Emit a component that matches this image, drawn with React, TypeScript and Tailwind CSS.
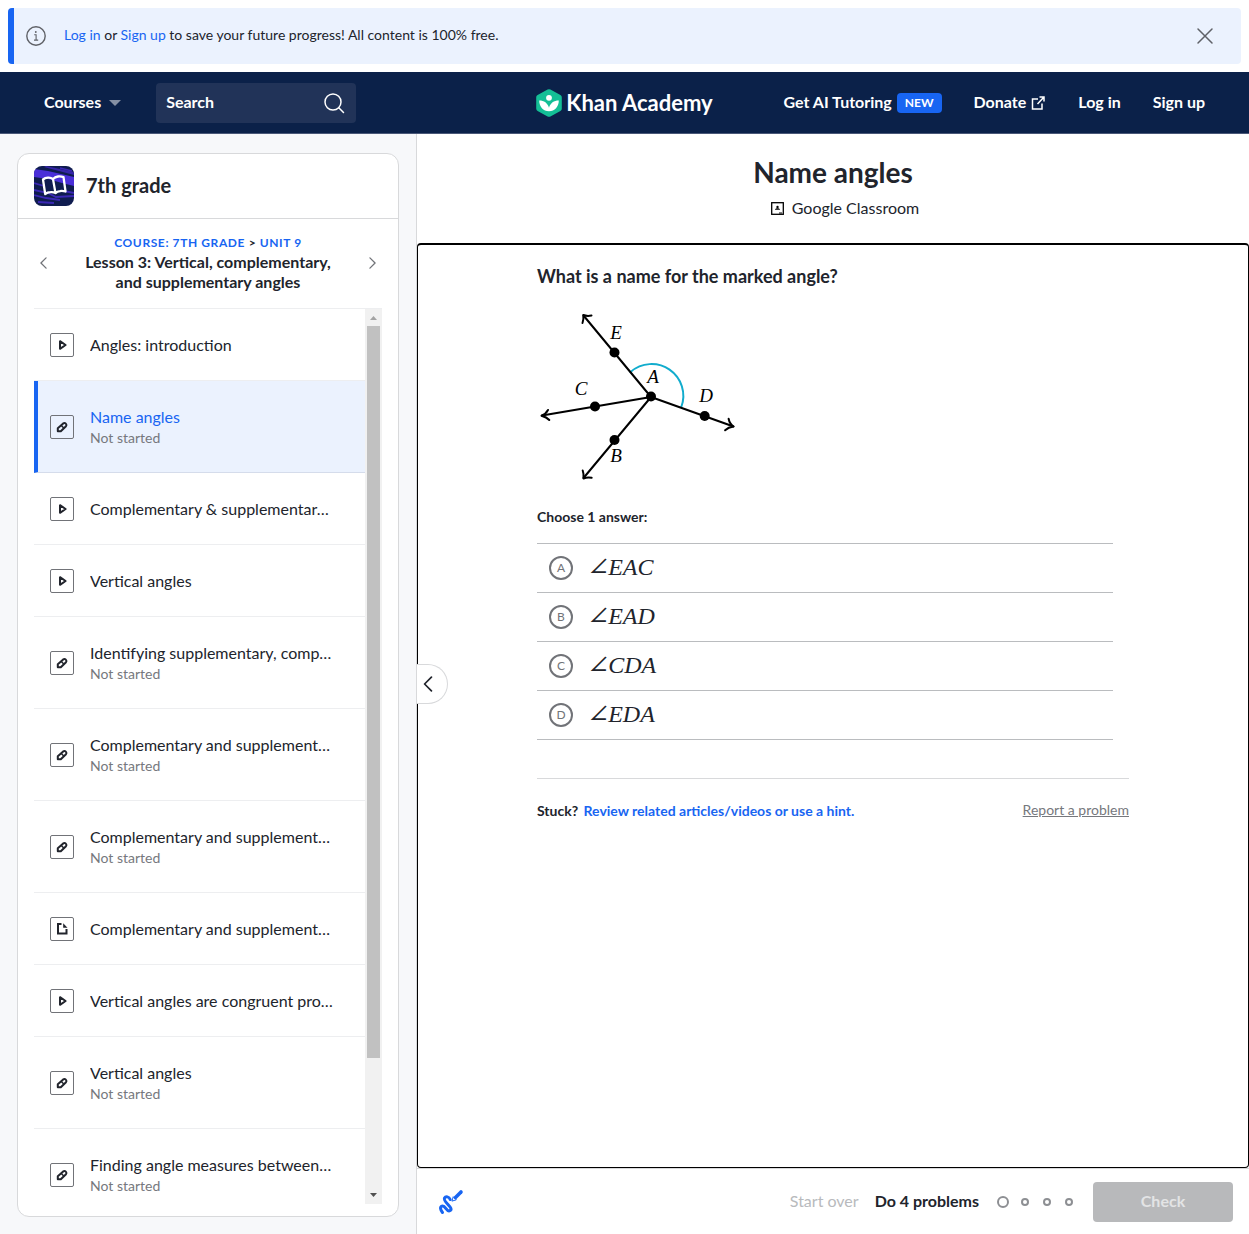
import React from "react";

type Kind = "video" | "exercise" | "article";

const lessons: { kind: Kind; title: string; status?: string; active?: boolean }[] = [
  { kind: "video", title: "Angles: introduction" },
  { kind: "exercise", title: "Name angles", status: "Not started", active: true },
  { kind: "video", title: "Complementary & supplementar…" },
  { kind: "video", title: "Vertical angles" },
  { kind: "exercise", title: "Identifying supplementary, comp…", status: "Not started" },
  { kind: "exercise", title: "Complementary and supplement…", status: "Not started" },
  { kind: "exercise", title: "Complementary and supplement…", status: "Not started" },
  { kind: "article", title: "Complementary and supplement…" },
  { kind: "video", title: "Vertical angles are congruent pro…" },
  { kind: "exercise", title: "Vertical angles", status: "Not started" },
  { kind: "exercise", title: "Finding angle measures between…", status: "Not started" },
];

const choices = [
  { key: "A", name: "EAC" },
  { key: "B", name: "EAD" },
  { key: "C", name: "CDA" },
  { key: "D", name: "EDA" },
];

function KindIcon({ kind }: { kind: Kind }) {
  return (
    <span className="flex size-6 shrink-0 items-center justify-center rounded-xs border border-[#717378]">
      <svg viewBox="0 0 24 24" className="size-6 shrink-0" fill="none" stroke="#21242c" strokeWidth="2" aria-hidden="true">
        {kind === "video" && <path d="M10 8.2v7.6l5.6-3.8z" strokeLinejoin="round" />}
        {kind === "exercise" && (
          <>
            <path d="M7.8 16.2v-3l5.4-4.8a2 2 0 0 1 2.8 2.8l-5.2 5z" strokeLinejoin="round" />
            <path d="M11 10.2l2.8 2.8" strokeWidth="1.5" />
          </>
        )}
        {kind === "article" && (
          <>
            <path d="M11.5 7H8v9.500h8.500v-4.500" />
            <path d="M13.2 6.300v4.500h4.300z" fill="#21242c" stroke="none" />
          </>
        )}
      </svg>
    </span>
  );
}

function Banner() {
  return (
    <div className="m-2 flex h-14 shrink-0 items-center rounded border-l-6 border-[#1865f2] bg-[#ebf2fe] pr-6 pl-3">
      <svg viewBox="0 0 20 20" className="size-5 shrink-0" fill="none" stroke="#5f6167" strokeWidth="1.4" aria-hidden="true">
        <circle cx="10" cy="10" r="9.2" />
        <path d="M8.2 8.8h1.9v5M8 14.1h4.2" strokeWidth="1.1" />
        <circle cx="9.8" cy="6" r="0.9" fill="#5f6167" stroke="none" />
      </svg>
      <p className="ml-[18px] flex-1 pb-0.5 text-sm">
        <a href="#login" className="text-[#1865f2]">Log in</a> or{" "}
        <a href="#signup" className="text-[#1865f2]">Sign up</a> to save your future progress! All content is 100% free.
      </p>
      <button type="button" aria-label="Close" className="flex size-6 items-center justify-center">
        <svg viewBox="0 0 24 24" className="size-6" fill="none" stroke="#5f6167" strokeWidth="1.5" strokeLinecap="round">
          <path d="M5 5l14 14M19 5L5 19" />
        </svg>
      </button>
    </div>
  );
}

function Logo() {
  return (
    <a href="#home" className="flex items-center gap-1">
      <svg viewBox="0 0 26 28" className="h-7 w-[26px]" aria-hidden="true">
        <path
          d="M11.6.5a3 3 0 0 1 2.8 0l10 5.600c.9.5 1.400 1.400 1.400 2.400v11c0 1-.5 1.900-1.400 2.400l-10 5.600a3 3 0 0 1-2.800 0l-10-5.600A2.800 2.800 0 0 1 .2 19.500v-11c0-1 .5-1.900 1.400-2.400z"
          fill="#14bf96"
        />
        <circle cx="13" cy="8.800" r="2.900" fill="#fff" />
        <path
          d="M3.200 11.500c4.800 0 8.600 2.600 9.800 7.200 1.200-4.600 5-7.200 9.800-7.200 0 6-4 10.800-9.800 10.800S3.200 17.500 3.200 11.500z"
          fill="#fff"
        />
      </svg>
      <span className="text-[22px] leading-7 font-bold">Khan Academy</span>
    </a>
  );
}

function Nav() {
  return (
    <header className="grid h-[62px] shrink-0 grid-cols-[1fr_auto_1fr] items-center border-b border-[#4a5878] bg-[#0b2149] px-11 text-base font-bold text-white">
      <div className="flex items-center gap-[35px]">
        <button type="button" className="flex items-center gap-2">
          <span className="pb-0.5">Courses</span>
          <svg viewBox="0 0 12 6" className="h-1.5 w-3" fill="#8590a4" aria-hidden="true">
            <path d="M0 0h12L6 6z" />
          </svg>
        </button>
        <div className="flex h-10 w-[200px] items-center rounded bg-[#213358] px-2.5">
          <input
            type="text"
            aria-label="Search"
            placeholder="Search"
            className="h-10 w-0 flex-1 bg-transparent pb-0.5 outline-none placeholder:text-white"
          />
          <svg viewBox="0 0 24 24" className="size-6" fill="none" stroke="#fff" strokeWidth="1.5" strokeLinecap="round" aria-hidden="true">
            <circle cx="11" cy="11" r="8" />
            <path d="M16.8 16.8L21.5 21.5" />
          </svg>
        </div>
      </div>
      <Logo />
      <nav className="flex items-center justify-end gap-8">
        <a href="#ai" className="flex items-center gap-[5px]">
          <span className="pb-0.5">Get AI Tutoring</span>
          <span className="rounded bg-[#1865f2] px-2 text-xs leading-5">NEW</span>
        </a>
        <a href="#donate" className="flex items-center gap-1">
          <span className="pb-0.5">Donate</span>
          <svg viewBox="0 0 16 16" className="size-4" fill="none" stroke="#fff" strokeWidth="1.5" aria-hidden="true">
            <path d="M8 4H2.500v10H12V8.500" />
            <path d="M9.500 2H14v4.500M14 2L7.500 9" />
          </svg>
        </a>
        <a href="#login" className="pb-0.5">Log in</a>
        <a href="#signup" className="pb-0.5">Sign up</a>
      </nav>
    </header>
  );
}

function CourseIcon() {
  return (
    <svg viewBox="0 0 40 40" className="size-10 rounded-lg" aria-hidden="true">
      <rect width="40" height="40" fill="#0f1c4f" />
      <path d="M0 3l14 2 26 6v9l-12-3-14-4L0 11z" fill="#4a2fd8" />
      <path d="M12 0l28 6v3L10 1z" fill="#3524a8" />
      <path d="M0 17l10 3M0 24l14 3 8 4 18-1M0 29l12 3 14 2M4 36l16 1M30 25l10 2M26 2l12 3" stroke="#3a27b4" strokeWidth="1.8" fill="none" />
      <path
        d="M9 13.500q2-1.600 5-1.800 3-.2 5 1.400 2-2.200 5-2.600 3-.3 5.500.6L31.500 25.500q-3-.8-5.500-.4-2.800.3-4.500 2-2.200-1.200-5-.9-3 .2-5.300 1.800zM19 13.100L21.500 27.100"
        fill="none"
        stroke="#fff"
        strokeWidth="2.3"
        strokeLinejoin="round"
      />
    </svg>
  );
}

function Chevron({ right, className }: { right?: boolean; className: string }) {
  return (
    <svg viewBox="0 0 8 14" className={className} fill="none" stroke="currentColor" strokeWidth="1.5" strokeLinecap="round" strokeLinejoin="round" aria-hidden="true">
      <path d={right ? "M1 1l6 6-6 6" : "M7 1L1 7l6 6"} />
    </svg>
  );
}

function Sidebar() {
  return (
    <aside className="flex w-[417px] shrink-0 flex-col border-r border-[#d8d9db] bg-[#f7f8fa] px-[17px] pt-[19px] pb-[17px]">
      <div className="flex min-h-0 flex-1 flex-col rounded-xl border border-[#d8d9db] bg-white">
        <a href="#course" className="flex items-center gap-3 border-b border-[#d8d9db] px-4 py-3">
          <CourseIcon />
          <span className="pb-[3px] text-xl font-bold">7th grade</span>
        </a>
        <div className="mx-4 flex items-center justify-between border-b border-[#edeef0] px-1.5 pt-3.5 pb-[15px]">
          <button type="button" aria-label="Previous lesson" className="text-[#717378]">
            <Chevron className="h-3 w-[7px]" />
          </button>
          <div className="text-center font-bold">
            <div className="text-xs leading-[19px] tracking-wider text-[#1865f2]">
              <a href="#course">COURSE: 7TH GRADE</a> <span className="text-[#21242c]">&gt;</span> <a href="#unit">UNIT 9</a>
            </div>
            <h2 className="pb-px leading-5">
              Lesson 3: Vertical, complementary,
              <br />
              and supplementary angles
            </h2>
          </div>
          <button type="button" aria-label="Next lesson" className="text-[#717378]">
            <Chevron right className="h-3 w-[7px]" />
          </button>
        </div>
        <div className="mx-4 mb-3 flex min-h-0 flex-1">
          <ul className="min-w-0 flex-1 overflow-hidden">
            {lessons.map((l, i) => (
              <li key={i}>
                <a
                  href="#lesson"
                  className={
                    "flex items-center gap-4 border-b pr-4 " +
                    (l.status ? "h-[92px] " : "h-[72px] ") +
                    (l.active ? "border-b-[#d5dceb] border-l-4 border-l-[#1865f2] bg-[#ebf2fe] pl-3" : "border-[#edeef0] pl-4")
                  }
                >
                  <KindIcon kind={l.kind} />
                  <span className="min-w-0">
                    <span className={"block truncate " + (l.status ? "pt-0.5 leading-5 " : "leading-5 ") + (l.active ? "text-[#1865f2]" : "")}>{l.title}</span>
                    {l.status && <span className="block text-sm leading-[22px] text-[#76787d]">{l.status}</span>}
                  </span>
                </a>
              </li>
            ))}
          </ul>
          <div className="flex w-[17px] flex-col items-center bg-[#f1f1f1]" aria-hidden="true">
            <svg viewBox="0 0 17 17" className="size-[17px] shrink-0" fill="#a3a3a3">
              <path d="M5 11h7L8.500 7z" />
            </svg>
            <div className="flex w-[13px] flex-1 flex-col">
              <div className="h-[85%] bg-[#c1c1c1]" />
            </div>
            <svg viewBox="0 0 17 17" className="size-[17px] shrink-0" fill="#505050">
              <path d="M5 6h7L8.500 10z" />
            </svg>
          </div>
        </div>
      </div>
    </aside>
  );
}

function AngleDiagram() {
  return (
    <svg viewBox="537 307 200 178" className="h-[178px] w-[200px]" role="img" aria-label="Rays AE, AC, AB and AD from point A">
      <g fill="none" stroke="#000" strokeWidth="2" strokeLinecap="round" strokeLinejoin="round">
        <path d="M630.500 372A31.800 31.800 0 0 1 681.300 407" stroke="#11accd" />
        <path d="M651 397L583.500 315.500M651 397L542 415.500M651 397L733.500 426.500M651 397L583.500 478" />
        <path d="M582.500 323c1-2.500 1.200-5 .8-8 2.500 1 5 1.200 8.200.5" />
        <path d="M548 410c-1.500 2.800-3.600 4.700-6.500 5.700 3 .8 5.700 2 7.800 4.300" />
        <path d="M728.600 418.800c.6 3.200 2.200 5.800 4.900 7.700-3.200.4-6 1.400-8.400 3.700" />
        <path d="M582.700 470.500c.9 2.500 1.200 5 .8 8 2.500-1.200 5-1.400 8.200-.8" />
      </g>
      <g fill="#000">
        <circle cx="614.500" cy="352.500" r="5" />
        <circle cx="651" cy="396.500" r="5" />
        <circle cx="595" cy="406.500" r="5" />
        <circle cx="704.700" cy="416" r="5" />
        <circle cx="614.500" cy="440" r="5" />
      </g>
      <g className="font-['Liberation_Serif',serif] text-[19px] italic" textAnchor="middle">
        <text x="616" y="339">E</text>
        <text x="581" y="395">C</text>
        <text x="653" y="383">A</text>
        <text x="706" y="402">D</text>
        <text x="616" y="462">B</text>
      </g>
    </svg>
  );
}

function Exercise() {
  return (
    <section className="min-h-0 flex-1 overflow-hidden rounded-sm border border-t-2 border-black px-8">
      <div className="mx-auto max-w-[592px]">
        <h2 className="mt-[19px] text-lg leading-6 font-bold">What is a name for the marked angle?</h2>
        <div className="mt-[19px]">
          <AngleDiagram />
        </div>
        <fieldset className="mr-4 mt-[21px]">
          <legend className="pb-[15px] text-sm leading-[22px] font-bold">Choose 1 answer:</legend>
          <ul className="border-t border-[#babcbf]">
            {choices.map((c) => (
              <li key={c.key} className="border-b border-[#babcbf]">
                <label className="flex h-12 items-center gap-4 px-3">
                  <input type="radio" name="answer" className="sr-only" />
                  <span className="flex size-6 items-center justify-center rounded-full border-2 border-[#717378] text-xs text-[#717378]">
                    {c.key}
                  </span>
                  <span className="flex items-center pb-0.5 font-['Liberation_Serif',serif] text-2xl italic">
                    <span className="font-['DejaVu_Math_TeX_Gyre','DejaVu_Sans',sans-serif] text-[21px] leading-8 font-extralight not-italic">∠</span>
                    {c.name}
                  </span>
                </label>
              </li>
            ))}
          </ul>
        </fieldset>
        <div className="mt-[38px] flex items-center justify-between border-t border-[#d8d9db] pt-5 text-sm leading-[22px]">
          <p className="font-bold">
            Stuck?{" "}
            <button type="button" className="ml-0.5 text-[#1865f2]">Review related articles/videos or use a hint.</button>
          </p>
          <a href="#report" className="pb-0.5 text-[#76787d] underline">Report a problem</a>
        </div>
      </div>
    </section>
  );
}

function Footer() {
  return (
    <footer className="flex h-[66px] shrink-0 items-center justify-between border-t border-[#d8d9db] pr-4 pl-5 text-base">
      <button type="button" aria-label="Scratchpad">
        <svg viewBox="0 0 28 28" className="size-7" fill="none" stroke="#1865f2" strokeLinecap="round" strokeLinejoin="round" aria-hidden="true">
          <path d="M5.500 24.500C3.200 21.500 2.800 19 5 18.200C8.500 17 9 23.800 12.500 22.800C18.500 20.800 5.500 14 7.500 10C8.700 8 12 8.500 13.200 11.500" strokeWidth="3" />
          <path d="M18.500 9.500L24 4" strokeWidth="3.6" />
          <path d="M16.500 9l2.800 2.800-4 1.200z" strokeWidth="1" />
        </svg>
      </button>
      <div className="flex items-center">
        <button type="button" disabled className="mr-4 pb-0.5 text-[#b8babd]">Start over</button>
        <span className="mr-[18px] pb-0.5 font-bold">Do 4 problems</span>
        <span className="mr-5 flex items-center gap-3.5" aria-hidden="true">
          <span className="-mr-0.5 size-3 rounded-full border-2 border-[#8d8f93]" />
          <span className="size-2 rounded-full border-2 border-[#8d8f93]" />
          <span className="size-2 rounded-full border-2 border-[#8d8f93]" />
          <span className="size-2 rounded-full border-2 border-[#8d8f93]" />
        </span>
        <button type="button" disabled className="h-10 w-[140px] rounded bg-[#b8b9bb] pb-0.5 font-bold text-[#e3e4e5]">Check</button>
      </div>
    </footer>
  );
}

export default function App() {
  return (
    <div className="flex h-screen flex-col bg-white font-[Lato,'Noto_Sans',sans-serif] text-[#21242c]">
      <Banner />
      <Nav />
      <div className="flex min-h-0 flex-1">
        <Sidebar />
        <main className="relative flex min-w-0 flex-1 flex-col">
          <div className="flex flex-col items-center pt-5 pb-[23px]">
            <h1 className="text-[28px] leading-9 font-bold">Name angles</h1>
            <button type="button" className="mt-1.5 flex items-center gap-2 pl-6 leading-6">
              <svg viewBox="0 0 13 13" className="size-[13px]" aria-hidden="true">
                <rect x="0.7" y="0.7" width="11.6" height="11.6" fill="none" stroke="#000" strokeWidth="1.3" />
                <circle cx="6.5" cy="5" r="1.2" />
                <path d="M4 7.800c0-1 1-1.500 2.500-1.500S9 6.800 9 7.800zM8 10.500h3v1H8z" />
              </svg>
              Google Classroom
            </button>
          </div>
          <Exercise />
          <Footer />
          <button
            type="button"
            aria-label="Collapse sidebar"
            className="absolute top-1/2 left-0 flex h-10 w-[31px] -translate-y-1/2 items-center rounded-r-full border border-l-0 border-[#d8d9db] bg-white pl-1.5"
          >
            <Chevron className="h-4 w-[10px]" />
          </button>
        </main>
      </div>
    </div>
  );
}
